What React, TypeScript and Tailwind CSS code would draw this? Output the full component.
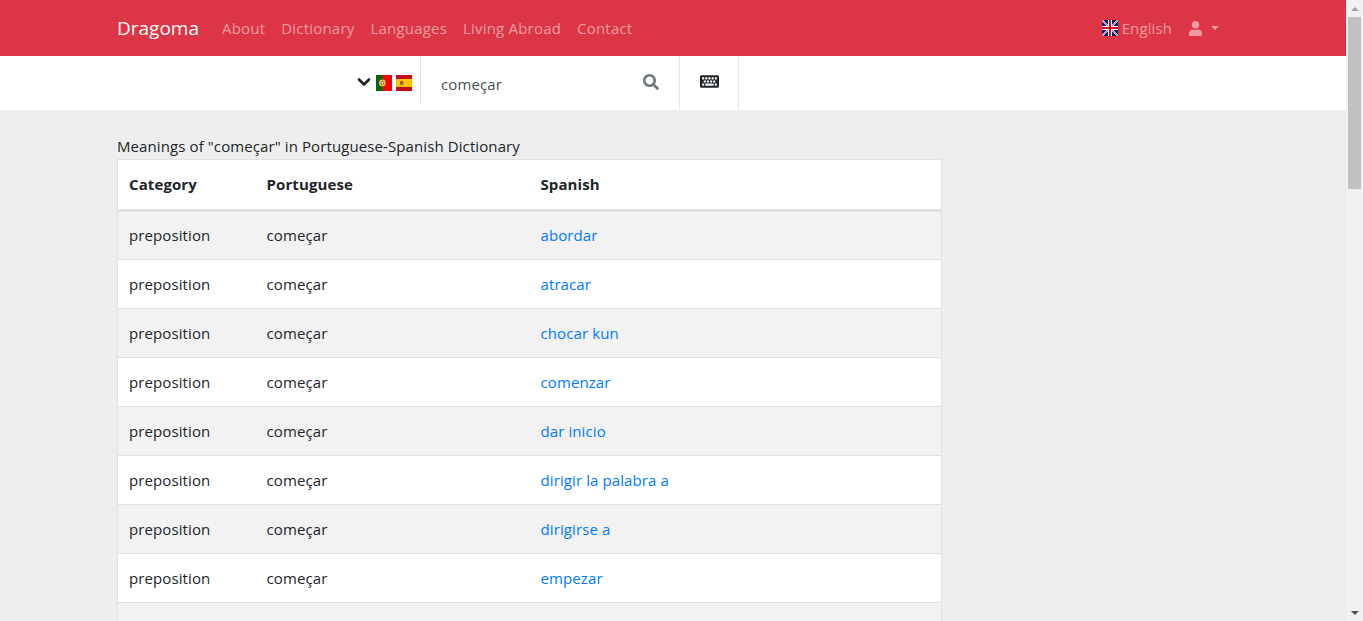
import { ChevronDown } from 'lucide-react';
import { FaKeyboard, FaSearch, FaUser } from 'react-icons/fa';

const words = ['abordar', 'atracar', 'chocar kun', 'comenzar', 'dar inicio', 'dirigir la palabra a', 'dirigirse a', 'empezar'];
const navLinks = ['About', 'Dictionary', 'Languages', 'Living Abroad', 'Contact'];

function FlagPT() {
  return (
    <svg width="16" height="16" viewBox="0 0 16 16" className="block">
      <rect width="16" height="16" fill="#f00" />
      <rect width="6.4" height="16" fill="#060" />
      <circle cx="6.4" cy="8" r="3.4" fill="#e8c040" />
      <circle cx="6.4" cy="8" r="1.8" fill="#c9524a" />
      <circle cx="6.4" cy="8" r="0.9" fill="#e6e6e6" />
    </svg>
  );
}

function FlagES() {
  return (
    <svg width="16" height="16" viewBox="0 0 16 16" className="block">
      <rect width="16" height="16" fill="#c60b1e" />
      <rect y="4" width="16" height="8" fill="#ffc400" />
      <rect x="4" y="6" width="3.4" height="4" rx="1" fill="#ad5a3a" />
    </svg>
  );
}

function FlagGB() {
  return (
    <svg width="16" height="16" viewBox="0 0 16 16" className="block">
      <rect width="16" height="16" fill="#012169" />
      <path d="M0 0 16 16M16 0 0 16" stroke="#fff" strokeWidth="1.6" />
      <path d="M0 0 16 16M16 0 0 16" stroke="#c8102e" strokeWidth="0.6" />
      <path d="M8 0V16M0 8H16" stroke="#fff" strokeWidth="4" />
      <path d="M8 0V16M0 8H16" stroke="#c8102e" strokeWidth="2" />
    </svg>
  );
}

function Scrollbar() {
  return (
    <div className="flex h-full w-[17px] shrink-0 flex-col items-center bg-[#f1f1f1]">
      <div className="flex h-[17px] w-full items-center justify-center">
        <div className="h-0 w-0 border-x-[4px] border-b-[4px] border-x-transparent border-b-[#a3a3a3]" />
      </div>
      <div className="h-[172px] w-[13px] bg-[#c1c1c1]" />
      <div className="flex-1" />
      <div className="flex h-[17px] w-full items-center justify-center">
        <div className="h-0 w-0 border-x-[4px] border-t-[4px] border-x-transparent border-t-[#505050]" />
      </div>
    </div>
  );
}

export default function App() {
  return (
    <div className="flex h-screen overflow-hidden bg-[#eeeeee] font-['Open_Sans','Liberation_Sans',sans-serif] text-[15px] tracking-[0.1px] text-[#212529]">
      <div className="min-w-0 flex-1 overflow-hidden">
        <nav className="flex h-14 items-center bg-[#dc3545] pl-[117px] pr-[127px]">
          <a className="mr-[23px] mt-[1px] text-[19px] tracking-normal text-white">Dragoma</a>
          <ul className="flex gap-4 tracking-[0.2px] text-[rgba(255,255,255,0.5)]">
            {navLinks.map((link) => (
              <li key={link}>{link}</li>
            ))}
          </ul>
          <div className="ml-auto flex items-center text-[rgba(255,255,255,0.5)]">
            <FlagGB />
            <span className="ml-1">English</span>
            <FaUser className="ml-4 h-[15px] w-[15px]" />
            <div className="ml-2 h-0 w-0 border-x-[4px] border-t-[4px] border-x-transparent border-t-[rgba(255,255,255,0.5)]" />
          </div>
        </nav>

        <div className="flex h-[54px] bg-white">
          <div className="ml-[354px] flex h-12 w-[67px] items-center self-start border-r border-[#e4e4e4] pt-1">
            <ChevronDown className="h-5 w-5 text-[#212529]" strokeWidth={3.2} />
            <span className="ml-[2px] mt-[1px]"><FlagPT /></span>
            <span className="ml-1 mt-[1px]"><FlagES /></span>
          </div>
          <div className="flex w-[259px] items-center border-r border-[#e4e4e4] pl-5 pr-5">
            <span className="mt-[2px] text-[#495057]">começar</span>
            <FaSearch className="mb-[3px] ml-auto h-4 w-4 text-[#6c757d]" />
          </div>
          <div className="flex w-[59px] items-center justify-center border-r border-[#e4e4e4] pb-1">
            <FaKeyboard className="h-[19px] w-[19px] text-[#212529]" />
          </div>
        </div>

        <main className="pl-[117px] pt-[26px]">
          <p className="h-[23px] leading-[21px]">Meanings of "começar" in Portuguese-Spanish Dictionary</p>
          <table className="w-[825px] table-fixed border-collapse border border-[#dee2e6] bg-white">
            <thead>
              <tr className="h-[51px] border-b-[3px] border-[#dee2e6] text-left">
                <th className="w-[138px] pl-[11px] font-bold">Category</th>
                <th className="w-[274px] pl-[11px] font-bold">Portuguese</th>
                <th className="pl-[11px] font-bold">Spanish</th>
              </tr>
            </thead>
            <tbody>
              {words.map((word) => (
                <tr key={word} className="h-[49px] border-b border-[#dee2e6] odd:bg-[#f2f2f2]">
                  <td className="pl-[11px]">preposition</td>
                  <td className="pl-[11px]">começar</td>
                  <td className="pl-[11px] text-[#007bff]">{word}</td>
                </tr>
              ))}
              <tr className="h-[49px] bg-[#f2f2f2]">
                <td colSpan={3} />
              </tr>
            </tbody>
          </table>
        </main>
      </div>
      <Scrollbar />
    </div>
  );
}
